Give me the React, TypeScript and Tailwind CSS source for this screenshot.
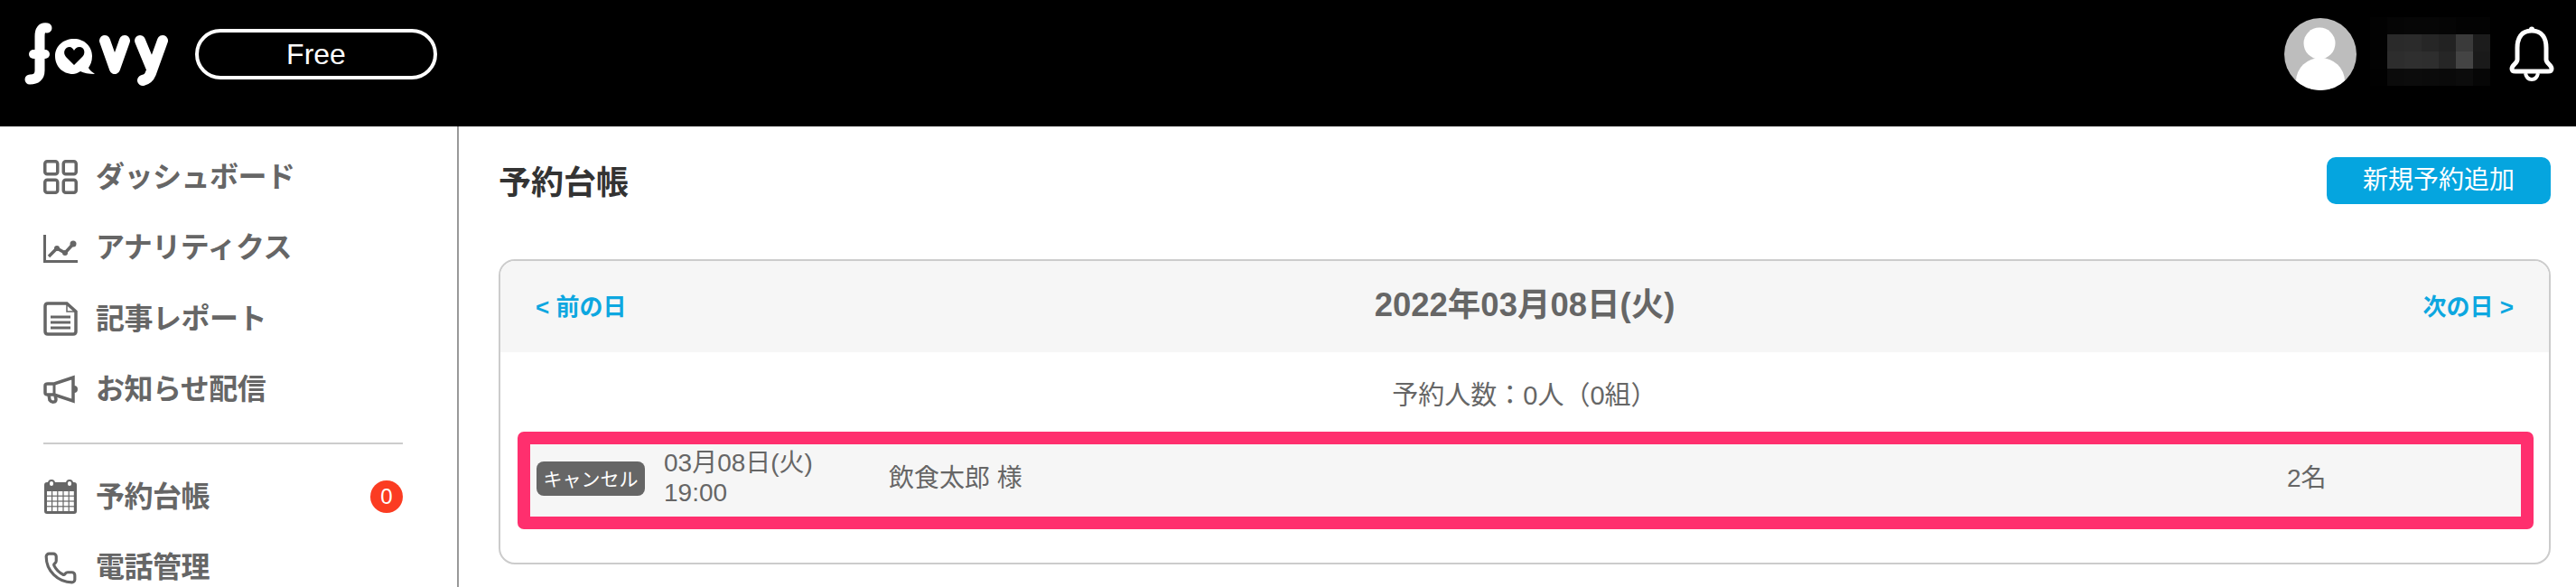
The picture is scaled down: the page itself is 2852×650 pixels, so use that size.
import { Phone } from "lucide-react";

const FONT = "[font-family:'Liberation_Sans','Noto_Sans_CJK_JP',sans-serif]";

const mosaic = [
  ["#020202", "#050505", "#060606", "#060606", "#050505", "#030303", "#030303"],
  ["#020202", "#2a2a2a", "#2b2b2b", "#262626", "#222222", "#3a3a3a", "#1c1c1c"],
  ["#020202", "#2d2d2d", "#2f2f2f", "#2e2e2e", "#262626", "#444444", "#1a1a1a"],
  ["#010101", "#0b0b0b", "#0c0c0c", "#0b0b0b", "#0a0a0a", "#0c0c0c", "#060606"],
];

function Logo() {
  return (
    <svg width="160" height="72" viewBox="0 0 160 72" fill="none" className="block">
      <g stroke="#fff" strokeWidth="12" strokeLinecap="round" strokeLinejoin="round">
        <path d="M26 7 C20 6 18 10 18 16 L18 54 C18 61 14 64 7 64" strokeWidth="11" />
        <path d="M11 36 H24" strokeWidth="10" />
        <path d="M90 21 L101 52 L112 21" />
        <path d="M129 21 L141 50" />
        <path d="M154 21 L141 57 C139 62 137 64 132 65" />
      </g>
      <path d="M56 19 C67 19 76 27 76 38 C76 44 74 48 72 51 C73 54 77 56 79 58 C72 58 67 57 63 55 C60 57 57 58 55 58 C43 58 35 49 35 38 C35 27 44 19 56 19 Z" fill="#fff" />
      <path d="M56 48 L47 39 C43 34 46 28 51 28 C53 28 55 30 56 32 C57 30 59 28 62 28 C67 28 69 34 66 38 Z" fill="#000" />
    </svg>
  );
}

function Bell() {
  return (
    <svg width="50" height="62" viewBox="0 0 50 62" fill="none" className="block">
      <path d="M25 5 C13 5 9 14 9 24 L9 37 C9 41 3 43 3 47 C3 49 4 50 7 50 L43 50 C46 50 47 49 47 47 C47 43 41 41 41 37 L41 24 C41 14 37 5 25 5 Z" stroke="#fff" strokeWidth="5" strokeLinejoin="round" />
      <path d="M18 52 C19 57 22 59 25 59 C28 59 31 57 32 52" stroke="#fff" strokeWidth="4" />
      <circle cx="25" cy="3.5" r="3" fill="#fff" />
    </svg>
  );
}

function Header() {
  return (
    <header className="flex h-[140px] items-center justify-between bg-black pb-[20px] pr-[24px]">
      <div className="flex items-center">
        <div className="ml-[26px]">
          <Logo />
        </div>
        <div className="ml-[30px] flex h-[56px] w-[268px] items-center justify-center rounded-full border-[4px] border-white text-[32px] leading-none text-white">
          Free
        </div>
      </div>
      <div className="flex items-center">
        <svg width="80" height="80" viewBox="0 0 80 80" className="block">
          <circle cx="40" cy="40" r="40" fill="#bdbdbd" />
          <clipPath id="av">
            <circle cx="40" cy="40" r="40" />
          </clipPath>
          <g clipPath="url(#av)" fill="#fff">
            <circle cx="39" cy="28" r="17.5" />
            <ellipse cx="40" cy="70" rx="27" ry="26" />
          </g>
        </svg>
        <svg width="133" height="76" viewBox="0 0 133 76" className="mb-[6px] ml-[15px] block">
          {mosaic.map((row, y) =>
            row.map((c, x) => <rect key={`${x}-${y}`} x={x * 19} y={y * 19} width="19" height="19" fill={c} />)
          )}
        </svg>
        <div className="ml-[21px]">
          <Bell />
        </div>
      </div>
    </header>
  );
}

const ic = { stroke: "#666", strokeWidth: 3.5, fill: "none" };

function GridIcon() {
  return (
    <svg width="38" height="38" viewBox="0 0 38 38" {...ic}>
      <rect x="1.75" y="1.75" width="14" height="14" rx="2.5" />
      <rect x="22.25" y="1.75" width="14" height="14" rx="2.5" />
      <rect x="1.75" y="22.25" width="14" height="14" rx="2.5" />
      <rect x="22.25" y="22.25" width="14" height="14" rx="2.5" />
    </svg>
  );
}

function ChartIcon() {
  return (
    <svg width="38" height="38" viewBox="0 0 38 38" {...ic}>
      <path d="M1.5 4 V33.5 H38" strokeWidth="3" />
      <path d="M6 28 L15 19 L24 24 L35 12" strokeWidth="3.5" />
      <circle cx="15" cy="19" r="3" fill="#666" stroke="none" />
      <circle cx="24" cy="24" r="3" fill="#666" stroke="none" />
      <circle cx="33" cy="14" r="3.5" fill="#666" stroke="none" />
    </svg>
  );
}

function DocIcon() {
  return (
    <svg width="38" height="38" viewBox="0 0 38 38" {...ic}>
      <path d="M5 2 H26 L36 11 V33 C36 35 35 36 33 36 H5 C3 36 2 35 2 33 V5 C2 3 3 2 5 2 Z" />
      <path d="M26 3 V11 H35" strokeWidth="1.5" />
      <path d="M8 17 H30 M8 23 H30 M8 29 H30" strokeWidth="3" />
    </svg>
  );
}

function MegaphoneIcon() {
  return (
    <svg width="38" height="38" viewBox="0 0 38 38" {...ic}>
      <path d="M2 14 C2 12 3 12 5 12 H12 L33 5 V31 L12 24 H5 C3 24 2 24 2 22 Z" />
      <path d="M12 12 V24" strokeWidth="3" />
      <path d="M6 24 L7 30 C9 33 14 33 14 29 L13 25" strokeWidth="3.5" />
      <path d="M34 15 C38 15 38 21 34 21" fill="#666" strokeWidth="2" />
    </svg>
  );
}

function CalendarIcon() {
  const cells = [];
  for (let y = 0; y < 4; y++) {
    for (let x = 0; x < 5; x++) {
      cells.push(<rect key={`${x}${y}`} x={4 + x * 6.2} y={13 + y * 5.8} width="5" height="4.6" fill="#fff" />);
    }
  }
  return (
    <svg width="38" height="38" viewBox="0 0 38 38" fill="none">
      <rect x="1" y="3" width="36" height="35" rx="3" fill="#666" />
      <rect x="6" y="1" width="6" height="7" rx="3" fill="#fff" stroke="#666" strokeWidth="2" />
      <rect x="26" y="1" width="6" height="7" rx="3" fill="#fff" stroke="#666" strokeWidth="2" />
      {cells}
    </svg>
  );
}

function NavItem({ icon, label, badge }: { icon: React.ReactNode; label: string; badge?: string }) {
  return (
    <div className="flex h-[78.5px] items-center">
      <div className="flex h-[38px] w-[38px] items-center justify-center">{icon}</div>
      <span className="mb-[1px] ml-[20px] flex-1 text-[32px] font-bold leading-none tracking-[-0.5px] text-[#666]">{label}</span>
      {badge && (
        <span className="flex h-[36px] w-[36px] items-center justify-center rounded-full bg-[#fb3c22] text-[24px] leading-none text-white">
          {badge}
        </span>
      )}
    </div>
  );
}

function Sidebar() {
  return (
    <aside className="w-[508px] shrink-0 border-r-2 border-[#999] pl-[48px] pr-[60px] pt-[17px]">
      <NavItem icon={<GridIcon />} label="ダッシュボード" />
      <NavItem icon={<ChartIcon />} label="アナリティクス" />
      <NavItem icon={<DocIcon />} label="記事レポート" />
      <NavItem icon={<MegaphoneIcon />} label="お知らせ配信" />
      <div className="mb-[19px] mt-[19px] h-[2px] bg-[#ccc]" />
      <NavItem icon={<CalendarIcon />} label="予約台帳" badge="0" />
      <NavItem icon={<Phone size={42} color="#666" strokeWidth={2} />} label="電話管理" />
    </aside>
  );
}

function Ledger() {
  return (
    <div className="h-[338px] overflow-hidden rounded-[18px] border-2 border-[#ccc]">
      <div className="flex h-[101px] items-center justify-between bg-[#f6f6f6] px-[39px] text-[26px] font-bold leading-none text-[#0da7e0]">
        <span>&lt; 前の日</span>
        <span className="mb-[2px] text-[36.5px] text-[#666]">2022年03月08日(火)</span>
        <span>次の日 &gt;</span>
      </div>
      <p className="pt-[34px] text-center text-[29px] leading-[28px] text-[#666]">予約人数：0人（0組）</p>
      <div className="ml-[19px] mr-[17px] mt-[26px] flex h-[108px] items-center overflow-hidden rounded-[7px] border-[14px] border-[#ff2f6e] bg-[#f6f6f6] pl-[7px] text-[28px] text-[#666]">
        <span className="mb-[4px] flex h-[38px] w-[120px] shrink-0 items-center justify-center rounded-[8px] bg-[#666] text-[21px] leading-none text-white">
          キャンセル
        </span>
        <div className="mb-[6px] ml-[21px] w-[249px] shrink-0 leading-[33px]">
          <div>03月08日(火)</div>
          <div>19:00</div>
        </div>
        <div className="mb-[4px] flex-1 leading-none">飲食太郎 様</div>
        <div className="mb-[4px] w-[259px] shrink-0 leading-none">2名</div>
      </div>
    </div>
  );
}

export default function App() {
  return (
    <div className={`h-[650px] overflow-hidden bg-white ${FONT}`}>
      <Header />
      <div className="flex h-[510px]">
        <Sidebar />
        <main className="flex-1 pl-[44px] pr-[28px] pt-[34px]">
          <div className="mb-[61px] flex h-[52px] items-center justify-between">
            <h1 className="pt-[5px] text-[36px] font-bold leading-none text-[#333]">予約台帳</h1>
            <button className="flex h-[52px] w-[248px] items-center justify-center rounded-[10px] bg-[#05a5df] text-[28px] leading-none text-white">
              新規予約追加
            </button>
          </div>
          <Ledger />
        </main>
      </div>
    </div>
  );
}
